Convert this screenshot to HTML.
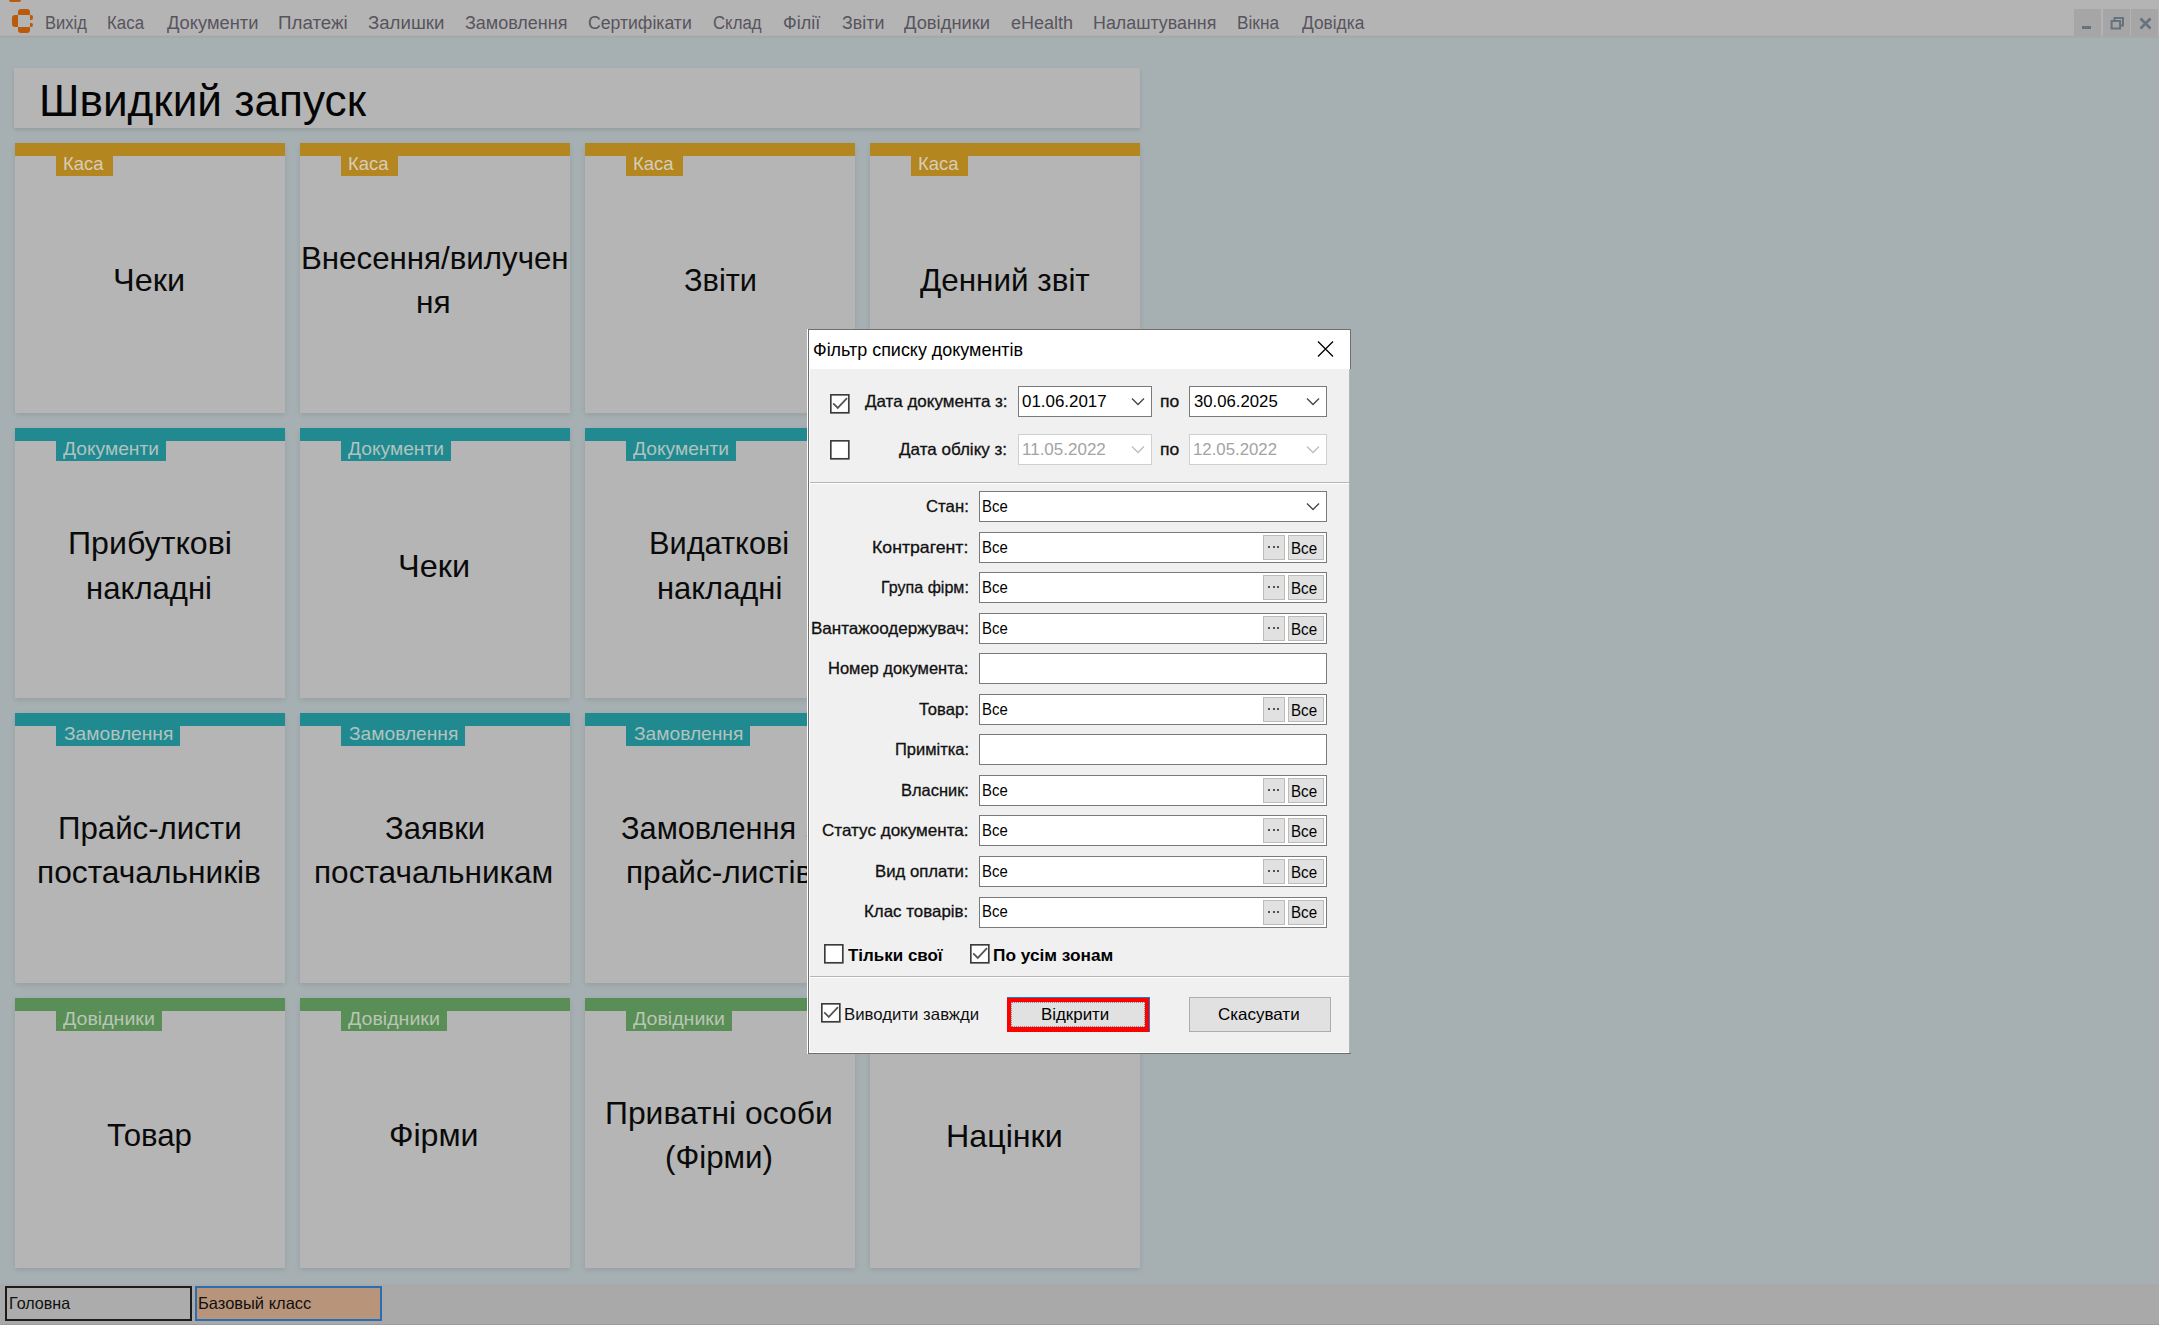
<!DOCTYPE html><html><head><meta charset="utf-8"><style>html,body{margin:0;padding:0;width:2159px;height:1325px;overflow:hidden;}body{position:relative;background:#a6b0b2;font-family:'Liberation Sans', sans-serif;}</style></head><body>
<div style="position:absolute;left:0px;top:0px;width:2159px;height:35px;background:#b4b4b4"></div>
<div style="position:absolute;left:0px;top:35px;width:2159px;height:1px;background:#afafaf"></div>
<div style="position:absolute;left:0px;top:36px;width:2159px;height:2px;background:#a8a8a8"></div>
<div style="position:absolute;left:9px;top:0px;width:12px;height:2px;background:#b95a0c;border-radius:0 0 3px 3px"></div>
<div style="position:absolute;left:18px;top:9px;width:11.5px;height:6px;background:#b95a0c;border-radius:3px 3px 0 0"></div>
<div style="position:absolute;left:12px;top:15.4px;width:6px;height:11.8px;background:#b95a0c;border-radius:3px 0 0 3px"></div>
<div style="position:absolute;left:18px;top:27.2px;width:11.5px;height:6.3px;background:#b95a0c;border-radius:0 0 3px 3px"></div>
<div style="position:absolute;left:29.8px;top:15.4px;width:3.2px;height:4.6px;background:#b95a0c;border-radius:0 2px 2px 0"></div>
<div style="position:absolute;left:29.8px;top:23px;width:3.2px;height:4.2px;background:#b95a0c;border-radius:0 2px 2px 0"></div>
<div style="position:absolute;left:44.78px;top:13.50px;font-size:18px;line-height:18px;white-space:nowrap;color:#58545e;font-weight:normal;transform-origin:0 0;transform:scaleX(0.9166);">Вихід</div>
<div style="position:absolute;left:107.06px;top:13.50px;font-size:18px;line-height:18px;white-space:nowrap;color:#58545e;font-weight:normal;transform-origin:0 0;transform:scaleX(0.9368);">Каса</div>
<div style="position:absolute;left:166.70px;top:13.50px;font-size:18px;line-height:18px;white-space:nowrap;color:#58545e;font-weight:normal;transform-origin:0 0;transform:scaleX(1.0163);">Документи</div>
<div style="position:absolute;left:277.96px;top:13.50px;font-size:18px;line-height:18px;white-space:nowrap;color:#58545e;font-weight:normal;transform-origin:0 0;transform:scaleX(1.0424);">Платежі</div>
<div style="position:absolute;left:367.70px;top:13.50px;font-size:18px;line-height:18px;white-space:nowrap;color:#58545e;font-weight:normal;transform-origin:0 0;transform:scaleX(1.0350);">Залишки</div>
<div style="position:absolute;left:465.00px;top:13.50px;font-size:18px;line-height:18px;white-space:nowrap;color:#58545e;font-weight:normal;transform-origin:0 0;transform:scaleX(0.9989);">Замовлення</div>
<div style="position:absolute;left:588.00px;top:13.50px;font-size:18px;line-height:18px;white-space:nowrap;color:#58545e;font-weight:normal;transform-origin:0 0;transform:scaleX(0.9794);">Сертифікати</div>
<div style="position:absolute;left:713.00px;top:13.50px;font-size:18px;line-height:18px;white-space:nowrap;color:#58545e;font-weight:normal;transform-origin:0 0;transform:scaleX(0.9317);">Склад</div>
<div style="position:absolute;left:782.70px;top:13.50px;font-size:18px;line-height:18px;white-space:nowrap;color:#58545e;font-weight:normal;transform-origin:0 0;transform:scaleX(1.0032);">Філії</div>
<div style="position:absolute;left:841.70px;top:13.50px;font-size:18px;line-height:18px;white-space:nowrap;color:#58545e;font-weight:normal;transform-origin:0 0;transform:scaleX(0.9909);">Звіти</div>
<div style="position:absolute;left:904.00px;top:13.50px;font-size:18px;line-height:18px;white-space:nowrap;color:#58545e;font-weight:normal;transform-origin:0 0;transform:scaleX(1.0199);">Довідники</div>
<div style="position:absolute;left:1011.00px;top:13.50px;font-size:18px;line-height:18px;white-space:nowrap;color:#58545e;font-weight:normal;transform-origin:0 0;transform:scaleX(0.9995);">eHealth</div>
<div style="position:absolute;left:1093.01px;top:13.50px;font-size:18px;line-height:18px;white-space:nowrap;color:#58545e;font-weight:normal;transform-origin:0 0;transform:scaleX(0.9913);">Налаштування</div>
<div style="position:absolute;left:1237.04px;top:13.50px;font-size:18px;line-height:18px;white-space:nowrap;color:#58545e;font-weight:normal;transform-origin:0 0;transform:scaleX(0.9585);">Вікна</div>
<div style="position:absolute;left:1301.50px;top:13.50px;font-size:18px;line-height:18px;white-space:nowrap;color:#58545e;font-weight:normal;transform-origin:0 0;transform:scaleX(0.9614);">Довідка</div>
<div style="position:absolute;left:2074px;top:9px;width:27px;height:27px;background:#a6a6a6"></div>
<div style="position:absolute;left:2103px;top:9px;width:27px;height:27px;background:#a6a6a6"></div>
<div style="position:absolute;left:2131px;top:9px;width:27px;height:27px;background:#a6a6a6"></div>
<div style="position:absolute;left:2082px;top:25.5px;width:9px;height:3.5px;background:#66727d"></div>
<svg style="position:absolute;left:2108px;top:15px" width="18" height="16" viewBox="0 0 18 16"><rect x="3.6" y="6" width="8.5" height="7.5" fill="none" stroke="#66727d" stroke-width="2"/><path d="M6.5 6V3h8.5v7.5h-3" fill="none" stroke="#66727d" stroke-width="2"/></svg>
<svg style="position:absolute;left:2138px;top:17px" width="16" height="14" viewBox="0 0 16 14"><path d="M2.5 1.5L12.5 11.5M12.5 1.5L2.5 11.5" stroke="#66727d" stroke-width="2.6"/></svg>
<div style="position:absolute;left:14px;top:68px;width:1126px;height:60px;background:#b5b5b5;box-shadow:0 2px 4px rgba(0,0,0,0.12)"></div>
<div style="position:absolute;left:38.76px;top:77.55px;font-size:45px;line-height:45px;white-space:nowrap;color:#050505;font-weight:normal;transform-origin:0 0;transform:scaleX(0.9812);">Швидкий запуск</div>
<div style="position:absolute;left:15px;top:143px;width:270px;height:270px;background:#b5b5b5;box-shadow:0 2px 5px rgba(0,0,0,0.10)"></div>
<div style="position:absolute;left:15px;top:143px;width:270px;height:13px;background:#b4861f"></div>
<div style="position:absolute;left:55.5px;top:156px;width:57.5px;height:20px;background:#b4861f"></div>
<div style="position:absolute;left:62.70px;top:155.08px;font-size:18.5px;line-height:18.5px;white-space:nowrap;color:#d5cdbb;font-weight:normal;transform-origin:0 0;transform:scaleX(0.9971);">Каса</div>
<div style="position:absolute;left:300px;top:143px;width:270px;height:270px;background:#b5b5b5;box-shadow:0 2px 5px rgba(0,0,0,0.10)"></div>
<div style="position:absolute;left:300px;top:143px;width:270px;height:13px;background:#b4861f"></div>
<div style="position:absolute;left:340.5px;top:156px;width:57.5px;height:20px;background:#b4861f"></div>
<div style="position:absolute;left:347.70px;top:155.08px;font-size:18.5px;line-height:18.5px;white-space:nowrap;color:#d5cdbb;font-weight:normal;transform-origin:0 0;transform:scaleX(0.9971);">Каса</div>
<div style="position:absolute;left:585px;top:143px;width:270px;height:270px;background:#b5b5b5;box-shadow:0 2px 5px rgba(0,0,0,0.10)"></div>
<div style="position:absolute;left:585px;top:143px;width:270px;height:13px;background:#b4861f"></div>
<div style="position:absolute;left:625.5px;top:156px;width:57.5px;height:20px;background:#b4861f"></div>
<div style="position:absolute;left:632.70px;top:155.08px;font-size:18.5px;line-height:18.5px;white-space:nowrap;color:#d5cdbb;font-weight:normal;transform-origin:0 0;transform:scaleX(0.9971);">Каса</div>
<div style="position:absolute;left:870px;top:143px;width:270px;height:270px;background:#b5b5b5;box-shadow:0 2px 5px rgba(0,0,0,0.10)"></div>
<div style="position:absolute;left:870px;top:143px;width:270px;height:13px;background:#b4861f"></div>
<div style="position:absolute;left:910.5px;top:156px;width:57.5px;height:20px;background:#b4861f"></div>
<div style="position:absolute;left:917.70px;top:155.08px;font-size:18.5px;line-height:18.5px;white-space:nowrap;color:#d5cdbb;font-weight:normal;transform-origin:0 0;transform:scaleX(0.9971);">Каса</div>
<div style="position:absolute;left:15px;top:428px;width:270px;height:270px;background:#b5b5b5;box-shadow:0 2px 5px rgba(0,0,0,0.10)"></div>
<div style="position:absolute;left:15px;top:428px;width:270px;height:13px;background:#218a91"></div>
<div style="position:absolute;left:55.5px;top:441px;width:110.8px;height:20px;background:#218a91"></div>
<div style="position:absolute;left:63.00px;top:440.07px;font-size:18.5px;line-height:18.5px;white-space:nowrap;color:#b2c3bf;font-weight:normal;transform-origin:0 0;transform:scaleX(1.0384);">Документи</div>
<div style="position:absolute;left:300px;top:428px;width:270px;height:270px;background:#b5b5b5;box-shadow:0 2px 5px rgba(0,0,0,0.10)"></div>
<div style="position:absolute;left:300px;top:428px;width:270px;height:13px;background:#218a91"></div>
<div style="position:absolute;left:340.5px;top:441px;width:110.8px;height:20px;background:#218a91"></div>
<div style="position:absolute;left:348.00px;top:440.07px;font-size:18.5px;line-height:18.5px;white-space:nowrap;color:#b2c3bf;font-weight:normal;transform-origin:0 0;transform:scaleX(1.0384);">Документи</div>
<div style="position:absolute;left:585px;top:428px;width:270px;height:270px;background:#b5b5b5;box-shadow:0 2px 5px rgba(0,0,0,0.10)"></div>
<div style="position:absolute;left:585px;top:428px;width:270px;height:13px;background:#218a91"></div>
<div style="position:absolute;left:625.5px;top:441px;width:110.8px;height:20px;background:#218a91"></div>
<div style="position:absolute;left:633.00px;top:440.07px;font-size:18.5px;line-height:18.5px;white-space:nowrap;color:#b2c3bf;font-weight:normal;transform-origin:0 0;transform:scaleX(1.0384);">Документи</div>
<div style="position:absolute;left:870px;top:428px;width:270px;height:270px;background:#b5b5b5;box-shadow:0 2px 5px rgba(0,0,0,0.10)"></div>
<div style="position:absolute;left:870px;top:428px;width:270px;height:13px;background:#218a91"></div>
<div style="position:absolute;left:910.5px;top:441px;width:110.8px;height:20px;background:#218a91"></div>
<div style="position:absolute;left:918.00px;top:440.07px;font-size:18.5px;line-height:18.5px;white-space:nowrap;color:#b2c3bf;font-weight:normal;transform-origin:0 0;transform:scaleX(1.0384);">Документи</div>
<div style="position:absolute;left:15px;top:713px;width:270px;height:270px;background:#b5b5b5;box-shadow:0 2px 5px rgba(0,0,0,0.10)"></div>
<div style="position:absolute;left:15px;top:713px;width:270px;height:13px;background:#218a91"></div>
<div style="position:absolute;left:55.5px;top:726px;width:124.5px;height:20px;background:#218a91"></div>
<div style="position:absolute;left:63.90px;top:725.07px;font-size:18.5px;line-height:18.5px;white-space:nowrap;color:#b2c3bf;font-weight:normal;transform-origin:0 0;transform:scaleX(1.0374);">Замовлення</div>
<div style="position:absolute;left:300px;top:713px;width:270px;height:270px;background:#b5b5b5;box-shadow:0 2px 5px rgba(0,0,0,0.10)"></div>
<div style="position:absolute;left:300px;top:713px;width:270px;height:13px;background:#218a91"></div>
<div style="position:absolute;left:340.5px;top:726px;width:124.5px;height:20px;background:#218a91"></div>
<div style="position:absolute;left:348.90px;top:725.07px;font-size:18.5px;line-height:18.5px;white-space:nowrap;color:#b2c3bf;font-weight:normal;transform-origin:0 0;transform:scaleX(1.0374);">Замовлення</div>
<div style="position:absolute;left:585px;top:713px;width:270px;height:270px;background:#b5b5b5;box-shadow:0 2px 5px rgba(0,0,0,0.10)"></div>
<div style="position:absolute;left:585px;top:713px;width:270px;height:13px;background:#218a91"></div>
<div style="position:absolute;left:625.5px;top:726px;width:124.5px;height:20px;background:#218a91"></div>
<div style="position:absolute;left:633.90px;top:725.07px;font-size:18.5px;line-height:18.5px;white-space:nowrap;color:#b2c3bf;font-weight:normal;transform-origin:0 0;transform:scaleX(1.0374);">Замовлення</div>
<div style="position:absolute;left:870px;top:713px;width:270px;height:270px;background:#b5b5b5;box-shadow:0 2px 5px rgba(0,0,0,0.10)"></div>
<div style="position:absolute;left:870px;top:713px;width:270px;height:13px;background:#218a91"></div>
<div style="position:absolute;left:910.5px;top:726px;width:124.5px;height:20px;background:#218a91"></div>
<div style="position:absolute;left:918.90px;top:725.07px;font-size:18.5px;line-height:18.5px;white-space:nowrap;color:#b2c3bf;font-weight:normal;transform-origin:0 0;transform:scaleX(1.0374);">Замовлення</div>
<div style="position:absolute;left:15px;top:998px;width:270px;height:270px;background:#b5b5b5;box-shadow:0 2px 5px rgba(0,0,0,0.10)"></div>
<div style="position:absolute;left:15px;top:998px;width:270px;height:13px;background:#5a8e57"></div>
<div style="position:absolute;left:55.5px;top:1011px;width:106.4px;height:20px;background:#5a8e57"></div>
<div style="position:absolute;left:62.60px;top:1010.07px;font-size:18.5px;line-height:18.5px;white-space:nowrap;color:#b9c5b5;font-weight:normal;transform-origin:0 0;transform:scaleX(1.0590);">Довідники</div>
<div style="position:absolute;left:300px;top:998px;width:270px;height:270px;background:#b5b5b5;box-shadow:0 2px 5px rgba(0,0,0,0.10)"></div>
<div style="position:absolute;left:300px;top:998px;width:270px;height:13px;background:#5a8e57"></div>
<div style="position:absolute;left:340.5px;top:1011px;width:106.4px;height:20px;background:#5a8e57"></div>
<div style="position:absolute;left:347.60px;top:1010.07px;font-size:18.5px;line-height:18.5px;white-space:nowrap;color:#b9c5b5;font-weight:normal;transform-origin:0 0;transform:scaleX(1.0590);">Довідники</div>
<div style="position:absolute;left:585px;top:998px;width:270px;height:270px;background:#b5b5b5;box-shadow:0 2px 5px rgba(0,0,0,0.10)"></div>
<div style="position:absolute;left:585px;top:998px;width:270px;height:13px;background:#5a8e57"></div>
<div style="position:absolute;left:625.5px;top:1011px;width:106.4px;height:20px;background:#5a8e57"></div>
<div style="position:absolute;left:632.60px;top:1010.07px;font-size:18.5px;line-height:18.5px;white-space:nowrap;color:#b9c5b5;font-weight:normal;transform-origin:0 0;transform:scaleX(1.0590);">Довідники</div>
<div style="position:absolute;left:870px;top:998px;width:270px;height:270px;background:#b5b5b5;box-shadow:0 2px 5px rgba(0,0,0,0.10)"></div>
<div style="position:absolute;left:870px;top:998px;width:270px;height:13px;background:#5a8e57"></div>
<div style="position:absolute;left:910.5px;top:1011px;width:106.4px;height:20px;background:#5a8e57"></div>
<div style="position:absolute;left:917.60px;top:1010.07px;font-size:18.5px;line-height:18.5px;white-space:nowrap;color:#b9c5b5;font-weight:normal;transform-origin:0 0;transform:scaleX(1.0590);">Довідники</div>
<div style="position:absolute;left:113.27px;top:264.00px;font-size:32px;line-height:32px;white-space:nowrap;color:#0a0a0a;font-weight:normal;transform-origin:0 0;transform:scaleX(1.0145);">Чеки</div>
<div style="position:absolute;left:301.05px;top:241.80px;font-size:32px;line-height:32px;white-space:nowrap;color:#0a0a0a;font-weight:normal;transform-origin:0 0;transform:scaleX(0.9771);">Внесення/вилучен</div>
<div style="position:absolute;left:416.32px;top:286.20px;font-size:32px;line-height:32px;white-space:nowrap;color:#0a0a0a;font-weight:normal;transform-origin:0 0;transform:scaleX(0.9914);">ня</div>
<div style="position:absolute;left:683.54px;top:264.00px;font-size:32px;line-height:32px;white-space:nowrap;color:#0a0a0a;font-weight:normal;transform-origin:0 0;transform:scaleX(0.9618);">Звіти</div>
<div style="position:absolute;left:919.60px;top:264.00px;font-size:32px;line-height:32px;white-space:nowrap;color:#0a0a0a;font-weight:normal;transform-origin:0 0;transform:scaleX(0.9819);">Денний звіт</div>
<div style="position:absolute;left:68.29px;top:527.30px;font-size:32px;line-height:32px;white-space:nowrap;color:#0a0a0a;font-weight:normal;transform-origin:0 0;transform:scaleX(1.0043);">Прибуткові</div>
<div style="position:absolute;left:86.46px;top:572.30px;font-size:32px;line-height:32px;white-space:nowrap;color:#0a0a0a;font-weight:normal;transform-origin:0 0;transform:scaleX(0.9710);">накладні</div>
<div style="position:absolute;left:398.17px;top:549.60px;font-size:32px;line-height:32px;white-space:nowrap;color:#0a0a0a;font-weight:normal;transform-origin:0 0;transform:scaleX(1.0145);">Чеки</div>
<div style="position:absolute;left:649.38px;top:526.70px;font-size:32px;line-height:32px;white-space:nowrap;color:#0a0a0a;font-weight:normal;transform-origin:0 0;transform:scaleX(0.9605);">Видаткові</div>
<div style="position:absolute;left:656.57px;top:571.70px;font-size:32px;line-height:32px;white-space:nowrap;color:#0a0a0a;font-weight:normal;transform-origin:0 0;transform:scaleX(0.9655);">накладні</div>
<div style="position:absolute;left:57.85px;top:811.80px;font-size:32px;line-height:32px;white-space:nowrap;color:#0a0a0a;font-weight:normal;transform-origin:0 0;transform:scaleX(0.9754);">Прайс-листи</div>
<div style="position:absolute;left:36.92px;top:856.20px;font-size:32px;line-height:32px;white-space:nowrap;color:#0a0a0a;font-weight:normal;transform-origin:0 0;transform:scaleX(0.9911);">постачальників</div>
<div style="position:absolute;left:385.33px;top:811.80px;font-size:32px;line-height:32px;white-space:nowrap;color:#0a0a0a;font-weight:normal;transform-origin:0 0;transform:scaleX(0.9686);">Заявки</div>
<div style="position:absolute;left:314.32px;top:856.20px;font-size:32px;line-height:32px;white-space:nowrap;color:#0a0a0a;font-weight:normal;transform-origin:0 0;transform:scaleX(0.9875);">постачальникам</div>
<div style="position:absolute;left:620.74px;top:811.70px;font-size:32px;line-height:32px;white-space:nowrap;color:#0a0a0a;font-weight:normal;transform-origin:0 0;transform:scaleX(0.9600);">Замовлення</div>
<div style="position:absolute;left:806.00px;top:811.70px;font-size:32px;line-height:32px;white-space:nowrap;color:#0a0a0a;font-weight:normal;transform-origin:0 0;transform:scaleX(0.8571);">з</div>
<div style="position:absolute;left:626.33px;top:856.10px;font-size:32px;line-height:32px;white-space:nowrap;color:#0a0a0a;font-weight:normal;transform-origin:0 0;transform:scaleX(0.9873);">прайс-листів</div>
<div style="position:absolute;left:107.00px;top:1119.00px;font-size:32px;line-height:32px;white-space:nowrap;color:#0a0a0a;font-weight:normal;transform-origin:0 0;transform:scaleX(0.9759);">Товар</div>
<div style="position:absolute;left:389.49px;top:1119.00px;font-size:32px;line-height:32px;white-space:nowrap;color:#0a0a0a;font-weight:normal;transform-origin:0 0;transform:scaleX(1.0054);">Фірми</div>
<div style="position:absolute;left:605.41px;top:1096.80px;font-size:32px;line-height:32px;white-space:nowrap;color:#0a0a0a;font-weight:normal;transform-origin:0 0;transform:scaleX(0.9950);">Приватні особи</div>
<div style="position:absolute;left:665.42px;top:1141.40px;font-size:32px;line-height:32px;white-space:nowrap;color:#0a0a0a;font-weight:normal;transform-origin:0 0;transform:scaleX(0.9780);">(Фірми)</div>
<div style="position:absolute;left:946.49px;top:1120.00px;font-size:32px;line-height:32px;white-space:nowrap;color:#0a0a0a;font-weight:normal;transform-origin:0 0;transform:scaleX(1.0070);">Націнки</div>
<div style="position:absolute;left:807px;top:329px;width:1px;height:725px;background:#ffffff"></div>
<div style="position:absolute;left:808px;top:329px;width:543px;height:40px;background:#ffffff;border:1px solid #6e6e6e;border-bottom:0;box-sizing:border-box"></div>
<div style="position:absolute;left:808px;top:369px;width:542px;height:684px;background:#f0f0f0;border-left:1px solid #6e6e6e;box-sizing:border-box"></div>
<div style="position:absolute;left:808px;top:1053px;width:543px;height:1px;background:#6e6e6e"></div>
<div style="position:absolute;left:809px;top:369px;width:1px;height:684px;background:#ffffff"></div>
<div style="position:absolute;left:809px;top:1052px;width:540px;height:1px;background:#ffffff"></div>
<div style="position:absolute;left:1349px;top:369px;width:1px;height:684px;background:#b4b4b4"></div>
<div style="position:absolute;left:813.36px;top:340.15px;font-size:19px;line-height:19px;white-space:nowrap;color:#000;font-weight:normal;transform-origin:0 0;transform:scaleX(0.9439);">Фільтр списку документів</div>
<svg style="position:absolute;left:1315px;top:339px" width="20" height="20" viewBox="0 0 20 20"><path d="M3 2.5L18 17.5M18 2.5L3 17.5" stroke="#000" stroke-width="1.3"/></svg>
<svg style="position:absolute;left:830px;top:393.7px" width="20" height="20" viewBox="0 0 20 20"><rect x="0.8" y="0.8" width="18" height="18" fill="#fff" stroke="#3c3c3c" stroke-width="1.7"/></svg>
<svg style="position:absolute;left:830px;top:393.7px" width="20" height="20" viewBox="0 0 20 20"><path d="M3.2 9.3L7.8 13.9L17 4.2" fill="none" stroke="#555" stroke-width="1.8"/></svg>
<svg style="position:absolute;left:830px;top:439.8px" width="20" height="20" viewBox="0 0 20 20"><rect x="0.8" y="0.8" width="18" height="18" fill="#fff" stroke="#3c3c3c" stroke-width="1.7"/></svg>
<div style="position:absolute;left:864.70px;top:393.18px;font-size:16.5px;line-height:16.5px;white-space:nowrap;color:#111;font-weight:normal;transform-origin:0 0;transform:scaleX(1.0310);-webkit-text-stroke:0.3px #111;">Дата документа з:</div>
<div style="position:absolute;left:899.20px;top:441.38px;font-size:16.5px;line-height:16.5px;white-space:nowrap;color:#111;font-weight:normal;transform-origin:0 0;transform:scaleX(1.0326);-webkit-text-stroke:0.3px #111;">Дата обліку з:</div>
<div style="position:absolute;left:1018px;top:386px;width:134px;height:31px;background:#fff;border:1.5px solid #7a7a7a;box-sizing:border-box"></div>
<div style="position:absolute;left:1021.80px;top:393.38px;font-size:16.5px;line-height:16.5px;white-space:nowrap;color:#000;font-weight:normal;transform-origin:0 0;transform:scaleX(1.0254);">01.06.2017</div>
<svg style="position:absolute;left:1131px;top:396.5px" width="14" height="10" viewBox="0 0 14 10"><path d="M1 1.5L7 7.5L13 1.5" fill="none" stroke="#444" stroke-width="1.3"/></svg>
<div style="position:absolute;left:1189px;top:386px;width:138px;height:31px;background:#fff;border:1.5px solid #7a7a7a;box-sizing:border-box"></div>
<div style="position:absolute;left:1193.50px;top:393.38px;font-size:16.5px;line-height:16.5px;white-space:nowrap;color:#000;font-weight:normal;transform-origin:0 0;transform:scaleX(1.0133);">30.06.2025</div>
<svg style="position:absolute;left:1306px;top:396.5px" width="14" height="10" viewBox="0 0 14 10"><path d="M1 1.5L7 7.5L13 1.5" fill="none" stroke="#444" stroke-width="1.3"/></svg>
<div style="position:absolute;left:1018px;top:434px;width:134px;height:31px;background:#fff;border:1.5px solid #cfcfcf;box-sizing:border-box"></div>
<div style="position:absolute;left:1021.97px;top:441.38px;font-size:16.5px;line-height:16.5px;white-space:nowrap;color:#a3a3a3;font-weight:normal;transform-origin:0 0;transform:scaleX(1.0302);">11.05.2022</div>
<svg style="position:absolute;left:1131px;top:444.5px" width="14" height="10" viewBox="0 0 14 10"><path d="M1 1.5L7 7.5L13 1.5" fill="none" stroke="#bdbdbd" stroke-width="1.3"/></svg>
<div style="position:absolute;left:1189px;top:434px;width:138px;height:31px;background:#fff;border:1.5px solid #cfcfcf;box-sizing:border-box"></div>
<div style="position:absolute;left:1192.98px;top:441.38px;font-size:16.5px;line-height:16.5px;white-space:nowrap;color:#a3a3a3;font-weight:normal;transform-origin:0 0;transform:scaleX(1.0171);">12.05.2022</div>
<svg style="position:absolute;left:1306px;top:444.5px" width="14" height="10" viewBox="0 0 14 10"><path d="M1 1.5L7 7.5L13 1.5" fill="none" stroke="#bdbdbd" stroke-width="1.3"/></svg>
<div style="position:absolute;left:1159.94px;top:393.38px;font-size:16.5px;line-height:16.5px;white-space:nowrap;color:#111;font-weight:normal;transform-origin:0 0;transform:scaleX(1.0629);-webkit-text-stroke:0.3px #111;">по</div>
<div style="position:absolute;left:1159.94px;top:441.38px;font-size:16.5px;line-height:16.5px;white-space:nowrap;color:#111;font-weight:normal;transform-origin:0 0;transform:scaleX(1.0629);-webkit-text-stroke:0.3px #111;">по</div>
<div style="position:absolute;left:810px;top:482px;width:539px;height:1px;background:#b4b4b4"></div>
<div style="position:absolute;left:810px;top:483px;width:539px;height:1px;background:#ffffff"></div>
<div style="position:absolute;left:925.80px;top:498.27px;font-size:16.5px;line-height:16.5px;white-space:nowrap;color:#111;font-weight:normal;transform-origin:0 0;transform:scaleX(1.0150);-webkit-text-stroke:0.3px #111;">Стан:</div>
<div style="position:absolute;left:979px;top:491px;width:348px;height:31px;background:#fff;border:1px solid #7a7a7a;box-sizing:border-box"></div>
<div style="position:absolute;left:982.00px;top:498.27px;font-size:16.5px;line-height:16.5px;white-space:nowrap;color:#000;font-weight:normal;transform-origin:0 0;transform:scaleX(0.9026);">Все</div>
<svg style="position:absolute;left:1306px;top:502px" width="14" height="10" viewBox="0 0 14 10"><path d="M1 1.5L7 7.5L13 1.5" fill="none" stroke="#444" stroke-width="1.3"/></svg>
<div style="position:absolute;left:872.33px;top:538.79px;font-size:16.5px;line-height:16.5px;white-space:nowrap;color:#111;font-weight:normal;transform-origin:0 0;transform:scaleX(1.0712);-webkit-text-stroke:0.3px #111;">Контрагент:</div>
<div style="position:absolute;left:979px;top:532px;width:348px;height:31px;background:#fff;border:1px solid #7a7a7a;box-sizing:border-box"></div>
<div style="position:absolute;left:982.00px;top:538.79px;font-size:16.5px;line-height:16.5px;white-space:nowrap;color:#000;font-weight:normal;transform-origin:0 0;transform:scaleX(0.9026);">Все</div>
<div style="position:absolute;left:1263px;top:535px;width:22px;height:25px;background:#e1e1e1;border:1px solid #bcbcbc;box-sizing:border-box"></div>
<div style="position:absolute;left:1268px;top:546px;width:2px;height:2px;background:#222;border-radius:1px"></div>
<div style="position:absolute;left:1272.5px;top:546px;width:2px;height:2px;background:#222;border-radius:1px"></div>
<div style="position:absolute;left:1277px;top:546px;width:2px;height:2px;background:#222;border-radius:1px"></div>
<div style="position:absolute;left:1288px;top:535px;width:36px;height:25px;background:#e1e1e1;border:1px solid #bcbcbc;box-sizing:border-box"></div>
<div style="position:absolute;left:1291.08px;top:539.79px;font-size:16.5px;line-height:16.5px;white-space:nowrap;color:#000;font-weight:normal;transform-origin:0 0;transform:scaleX(0.9173);">Все</div>
<div style="position:absolute;left:880.73px;top:579.31px;font-size:16.5px;line-height:16.5px;white-space:nowrap;color:#111;font-weight:normal;transform-origin:0 0;transform:scaleX(0.9729);-webkit-text-stroke:0.3px #111;">Група фірм:</div>
<div style="position:absolute;left:979px;top:572px;width:348px;height:31px;background:#fff;border:1px solid #7a7a7a;box-sizing:border-box"></div>
<div style="position:absolute;left:982.00px;top:579.31px;font-size:16.5px;line-height:16.5px;white-space:nowrap;color:#000;font-weight:normal;transform-origin:0 0;transform:scaleX(0.9026);">Все</div>
<div style="position:absolute;left:1263px;top:575px;width:22px;height:25px;background:#e1e1e1;border:1px solid #bcbcbc;box-sizing:border-box"></div>
<div style="position:absolute;left:1268px;top:586px;width:2px;height:2px;background:#222;border-radius:1px"></div>
<div style="position:absolute;left:1272.5px;top:586px;width:2px;height:2px;background:#222;border-radius:1px"></div>
<div style="position:absolute;left:1277px;top:586px;width:2px;height:2px;background:#222;border-radius:1px"></div>
<div style="position:absolute;left:1288px;top:575px;width:36px;height:25px;background:#e1e1e1;border:1px solid #bcbcbc;box-sizing:border-box"></div>
<div style="position:absolute;left:1291.08px;top:580.31px;font-size:16.5px;line-height:16.5px;white-space:nowrap;color:#000;font-weight:normal;transform-origin:0 0;transform:scaleX(0.9173);">Все</div>
<div style="position:absolute;left:810.67px;top:619.83px;font-size:16.5px;line-height:16.5px;white-space:nowrap;color:#111;font-weight:normal;transform-origin:0 0;transform:scaleX(1.0329);-webkit-text-stroke:0.3px #111;">Вантажоодержувач:</div>
<div style="position:absolute;left:979px;top:613px;width:348px;height:31px;background:#fff;border:1px solid #7a7a7a;box-sizing:border-box"></div>
<div style="position:absolute;left:982.00px;top:619.83px;font-size:16.5px;line-height:16.5px;white-space:nowrap;color:#000;font-weight:normal;transform-origin:0 0;transform:scaleX(0.9026);">Все</div>
<div style="position:absolute;left:1263px;top:616px;width:22px;height:25px;background:#e1e1e1;border:1px solid #bcbcbc;box-sizing:border-box"></div>
<div style="position:absolute;left:1268px;top:627px;width:2px;height:2px;background:#222;border-radius:1px"></div>
<div style="position:absolute;left:1272.5px;top:627px;width:2px;height:2px;background:#222;border-radius:1px"></div>
<div style="position:absolute;left:1277px;top:627px;width:2px;height:2px;background:#222;border-radius:1px"></div>
<div style="position:absolute;left:1288px;top:616px;width:36px;height:25px;background:#e1e1e1;border:1px solid #bcbcbc;box-sizing:border-box"></div>
<div style="position:absolute;left:1291.08px;top:620.83px;font-size:16.5px;line-height:16.5px;white-space:nowrap;color:#000;font-weight:normal;transform-origin:0 0;transform:scaleX(0.9173);">Все</div>
<div style="position:absolute;left:828.30px;top:660.36px;font-size:16.5px;line-height:16.5px;white-space:nowrap;color:#111;font-weight:normal;transform-origin:0 0;transform:scaleX(0.9991);-webkit-text-stroke:0.3px #111;">Номер документа:</div>
<div style="position:absolute;left:979px;top:653px;width:348px;height:31px;background:#fff;border:1px solid #7a7a7a;box-sizing:border-box"></div>
<div style="position:absolute;left:918.80px;top:700.88px;font-size:16.5px;line-height:16.5px;white-space:nowrap;color:#111;font-weight:normal;transform-origin:0 0;transform:scaleX(1.0061);-webkit-text-stroke:0.3px #111;">Товар:</div>
<div style="position:absolute;left:979px;top:694px;width:348px;height:31px;background:#fff;border:1px solid #7a7a7a;box-sizing:border-box"></div>
<div style="position:absolute;left:982.00px;top:700.88px;font-size:16.5px;line-height:16.5px;white-space:nowrap;color:#000;font-weight:normal;transform-origin:0 0;transform:scaleX(0.9026);">Все</div>
<div style="position:absolute;left:1263px;top:697px;width:22px;height:25px;background:#e1e1e1;border:1px solid #bcbcbc;box-sizing:border-box"></div>
<div style="position:absolute;left:1268px;top:708px;width:2px;height:2px;background:#222;border-radius:1px"></div>
<div style="position:absolute;left:1272.5px;top:708px;width:2px;height:2px;background:#222;border-radius:1px"></div>
<div style="position:absolute;left:1277px;top:708px;width:2px;height:2px;background:#222;border-radius:1px"></div>
<div style="position:absolute;left:1288px;top:697px;width:36px;height:25px;background:#e1e1e1;border:1px solid #bcbcbc;box-sizing:border-box"></div>
<div style="position:absolute;left:1291.08px;top:701.88px;font-size:16.5px;line-height:16.5px;white-space:nowrap;color:#000;font-weight:normal;transform-origin:0 0;transform:scaleX(0.9173);">Все</div>
<div style="position:absolute;left:894.50px;top:741.39px;font-size:16.5px;line-height:16.5px;white-space:nowrap;color:#111;font-weight:normal;transform-origin:0 0;transform:scaleX(0.9989);-webkit-text-stroke:0.3px #111;">Примітка:</div>
<div style="position:absolute;left:979px;top:734px;width:348px;height:31px;background:#fff;border:1px solid #7a7a7a;box-sizing:border-box"></div>
<div style="position:absolute;left:900.70px;top:781.92px;font-size:16.5px;line-height:16.5px;white-space:nowrap;color:#111;font-weight:normal;transform-origin:0 0;transform:scaleX(0.9954);-webkit-text-stroke:0.3px #111;">Власник:</div>
<div style="position:absolute;left:979px;top:775px;width:348px;height:31px;background:#fff;border:1px solid #7a7a7a;box-sizing:border-box"></div>
<div style="position:absolute;left:982.00px;top:781.92px;font-size:16.5px;line-height:16.5px;white-space:nowrap;color:#000;font-weight:normal;transform-origin:0 0;transform:scaleX(0.9026);">Все</div>
<div style="position:absolute;left:1263px;top:778px;width:22px;height:25px;background:#e1e1e1;border:1px solid #bcbcbc;box-sizing:border-box"></div>
<div style="position:absolute;left:1268px;top:789px;width:2px;height:2px;background:#222;border-radius:1px"></div>
<div style="position:absolute;left:1272.5px;top:789px;width:2px;height:2px;background:#222;border-radius:1px"></div>
<div style="position:absolute;left:1277px;top:789px;width:2px;height:2px;background:#222;border-radius:1px"></div>
<div style="position:absolute;left:1288px;top:778px;width:36px;height:25px;background:#e1e1e1;border:1px solid #bcbcbc;box-sizing:border-box"></div>
<div style="position:absolute;left:1291.08px;top:782.92px;font-size:16.5px;line-height:16.5px;white-space:nowrap;color:#000;font-weight:normal;transform-origin:0 0;transform:scaleX(0.9173);">Все</div>
<div style="position:absolute;left:822.00px;top:822.44px;font-size:16.5px;line-height:16.5px;white-space:nowrap;color:#111;font-weight:normal;transform-origin:0 0;transform:scaleX(1.0340);-webkit-text-stroke:0.3px #111;">Статус документа:</div>
<div style="position:absolute;left:979px;top:815px;width:348px;height:31px;background:#fff;border:1px solid #7a7a7a;box-sizing:border-box"></div>
<div style="position:absolute;left:982.00px;top:822.44px;font-size:16.5px;line-height:16.5px;white-space:nowrap;color:#000;font-weight:normal;transform-origin:0 0;transform:scaleX(0.9026);">Все</div>
<div style="position:absolute;left:1263px;top:818px;width:22px;height:25px;background:#e1e1e1;border:1px solid #bcbcbc;box-sizing:border-box"></div>
<div style="position:absolute;left:1268px;top:829px;width:2px;height:2px;background:#222;border-radius:1px"></div>
<div style="position:absolute;left:1272.5px;top:829px;width:2px;height:2px;background:#222;border-radius:1px"></div>
<div style="position:absolute;left:1277px;top:829px;width:2px;height:2px;background:#222;border-radius:1px"></div>
<div style="position:absolute;left:1288px;top:818px;width:36px;height:25px;background:#e1e1e1;border:1px solid #bcbcbc;box-sizing:border-box"></div>
<div style="position:absolute;left:1291.08px;top:823.44px;font-size:16.5px;line-height:16.5px;white-space:nowrap;color:#000;font-weight:normal;transform-origin:0 0;transform:scaleX(0.9173);">Все</div>
<div style="position:absolute;left:874.99px;top:862.96px;font-size:16.5px;line-height:16.5px;white-space:nowrap;color:#111;font-weight:normal;transform-origin:0 0;transform:scaleX(1.0137);-webkit-text-stroke:0.3px #111;">Вид оплати:</div>
<div style="position:absolute;left:979px;top:856px;width:348px;height:31px;background:#fff;border:1px solid #7a7a7a;box-sizing:border-box"></div>
<div style="position:absolute;left:982.00px;top:862.96px;font-size:16.5px;line-height:16.5px;white-space:nowrap;color:#000;font-weight:normal;transform-origin:0 0;transform:scaleX(0.9026);">Все</div>
<div style="position:absolute;left:1263px;top:859px;width:22px;height:25px;background:#e1e1e1;border:1px solid #bcbcbc;box-sizing:border-box"></div>
<div style="position:absolute;left:1268px;top:870px;width:2px;height:2px;background:#222;border-radius:1px"></div>
<div style="position:absolute;left:1272.5px;top:870px;width:2px;height:2px;background:#222;border-radius:1px"></div>
<div style="position:absolute;left:1277px;top:870px;width:2px;height:2px;background:#222;border-radius:1px"></div>
<div style="position:absolute;left:1288px;top:859px;width:36px;height:25px;background:#e1e1e1;border:1px solid #bcbcbc;box-sizing:border-box"></div>
<div style="position:absolute;left:1291.08px;top:863.96px;font-size:16.5px;line-height:16.5px;white-space:nowrap;color:#000;font-weight:normal;transform-origin:0 0;transform:scaleX(0.9173);">Все</div>
<div style="position:absolute;left:864.38px;top:903.48px;font-size:16.5px;line-height:16.5px;white-space:nowrap;color:#111;font-weight:normal;transform-origin:0 0;transform:scaleX(1.0243);-webkit-text-stroke:0.3px #111;">Клас товарів:</div>
<div style="position:absolute;left:979px;top:897px;width:348px;height:31px;background:#fff;border:1px solid #7a7a7a;box-sizing:border-box"></div>
<div style="position:absolute;left:982.00px;top:903.48px;font-size:16.5px;line-height:16.5px;white-space:nowrap;color:#000;font-weight:normal;transform-origin:0 0;transform:scaleX(0.9026);">Все</div>
<div style="position:absolute;left:1263px;top:900px;width:22px;height:25px;background:#e1e1e1;border:1px solid #bcbcbc;box-sizing:border-box"></div>
<div style="position:absolute;left:1268px;top:911px;width:2px;height:2px;background:#222;border-radius:1px"></div>
<div style="position:absolute;left:1272.5px;top:911px;width:2px;height:2px;background:#222;border-radius:1px"></div>
<div style="position:absolute;left:1277px;top:911px;width:2px;height:2px;background:#222;border-radius:1px"></div>
<div style="position:absolute;left:1288px;top:900px;width:36px;height:25px;background:#e1e1e1;border:1px solid #bcbcbc;box-sizing:border-box"></div>
<div style="position:absolute;left:1291.08px;top:904.48px;font-size:16.5px;line-height:16.5px;white-space:nowrap;color:#000;font-weight:normal;transform-origin:0 0;transform:scaleX(0.9173);">Все</div>
<svg style="position:absolute;left:823.5px;top:944px" width="20" height="20" viewBox="0 0 20 20"><rect x="0.8" y="0.8" width="18" height="18" fill="#fff" stroke="#3c3c3c" stroke-width="1.7"/></svg>
<div style="position:absolute;left:848.00px;top:946.68px;font-size:16.5px;line-height:16.5px;white-space:nowrap;color:#000;font-weight:bold;transform-origin:0 0;transform:scaleX(1.0275);">Тільки свої</div>
<svg style="position:absolute;left:969.5px;top:944px" width="20" height="20" viewBox="0 0 20 20"><rect x="0.8" y="0.8" width="18" height="18" fill="#fff" stroke="#3c3c3c" stroke-width="1.7"/></svg>
<svg style="position:absolute;left:969.5px;top:944px" width="20" height="20" viewBox="0 0 20 20"><path d="M3.2 9.3L7.8 13.9L17 4.2" fill="none" stroke="#555" stroke-width="1.8"/></svg>
<div style="position:absolute;left:992.95px;top:946.68px;font-size:16.5px;line-height:16.5px;white-space:nowrap;color:#000;font-weight:bold;transform-origin:0 0;transform:scaleX(1.0452);">По усім зонам</div>
<div style="position:absolute;left:810px;top:976px;width:539px;height:1px;background:#b4b4b4"></div>
<div style="position:absolute;left:810px;top:977px;width:539px;height:1px;background:#ffffff"></div>
<svg style="position:absolute;left:821px;top:1003px" width="20" height="20" viewBox="0 0 20 20"><rect x="0.8" y="0.8" width="18" height="18" fill="#fff" stroke="#3c3c3c" stroke-width="1.7"/></svg>
<svg style="position:absolute;left:821px;top:1003px" width="20" height="20" viewBox="0 0 20 20"><path d="M3.2 9.3L7.8 13.9L17 4.2" fill="none" stroke="#555" stroke-width="1.8"/></svg>
<div style="position:absolute;left:843.98px;top:1005.88px;font-size:16.5px;line-height:16.5px;white-space:nowrap;color:#111;font-weight:normal;transform-origin:0 0;transform:scaleX(1.0166);">Виводити завжди</div>
<div style="position:absolute;left:1007px;top:997px;width:142.5px;height:34.5px;background:#1a7fd4"></div>
<div style="position:absolute;left:1007px;top:998px;width:141.5px;height:33.5px;background:#ff0000"></div>
<div style="position:absolute;left:1011px;top:1002px;width:134px;height:24.7px;background:#e1e1e1"></div>
<div style="position:absolute;left:1011px;top:1002px;width:134px;height:24.7px;border:1px dotted #888;box-sizing:border-box"></div>
<div style="position:absolute;left:1041.28px;top:1005.68px;font-size:16.5px;line-height:16.5px;white-space:nowrap;color:#000;font-weight:normal;transform-origin:0 0;transform:scaleX(1.0234);">Відкрити</div>
<div style="position:absolute;left:1189px;top:997px;width:142px;height:34.5px;background:#e1e1e1;border:1px solid #adadad;box-sizing:border-box"></div>
<div style="position:absolute;left:1218.00px;top:1005.88px;font-size:16.5px;line-height:16.5px;white-space:nowrap;color:#000;font-weight:normal;transform-origin:0 0;transform:scaleX(1.0288);">Скасувати</div>
<div style="position:absolute;left:0px;top:1284px;width:2159px;height:41px;background:#a9a9a9"></div>
<div style="position:absolute;left:0px;top:1324px;width:2159px;height:1px;background:#9c9c9c"></div>
<div style="position:absolute;left:5px;top:1286px;width:187px;height:35px;background:#acacac;border:2px solid #1c1c1c;box-sizing:border-box"></div>
<div style="position:absolute;left:8.52px;top:1294.97px;font-size:16.5px;line-height:16.5px;white-space:nowrap;color:#101010;font-weight:normal;transform-origin:0 0;transform:scaleX(0.9758);">Головна</div>
<div style="position:absolute;left:195px;top:1286px;width:187px;height:35px;background:#b8957a;border:2px solid #2a6db2;box-sizing:border-box"></div>
<div style="position:absolute;left:198.00px;top:1294.97px;font-size:16.5px;line-height:16.5px;white-space:nowrap;color:#101010;font-weight:normal;transform-origin:0 0;transform:scaleX(0.9977);">Базовый класс</div>
</body></html>
